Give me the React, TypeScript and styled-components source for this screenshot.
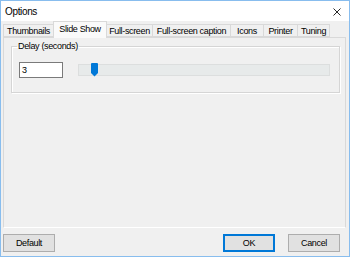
import React from 'react';
import styled, { createGlobalStyle } from 'styled-components';

const GlobalStyle = createGlobalStyle`
  html, body {
    margin: 0;
    padding: 0;
    background: #f0f0f0;
  }
  body {
    font-family: "Liberation Sans", Arial, sans-serif;
    font-size: 9px;
    letter-spacing: -0.35px;
    color: #000;
  }
`;

const Window = styled.div`
  width: 350px;
  height: 257px;
  box-sizing: border-box;
  border: 1px solid #88bdee;
  background: #f0f0f0;
  display: flex;
  flex-direction: column;
`;

const TitleBar = styled.div`
  height: 20px;
  background: #fff;
  display: flex;
  align-items: center;
  justify-content: space-between;
  padding: 0 8px 0 4px;
  font-size: 10px;
`;

const CloseIcon = styled.svg`
  width: 8px;
  height: 8px;
  margin-top: 1px;
`;

const TabStrip = styled.div`
  height: 16px;
  display: flex;
  align-items: flex-end;
  padding-left: 2px;
  position: relative;
  z-index: 1;
`;

const Tab = styled.div<{ $w: number; $active?: boolean }>`
  width: ${p => p.$w}px;
  height: ${p => (p.$active ? 17 : 13)}px;
  margin-bottom: ${p => (p.$active ? -1 : 0)}px;
  margin-right: -1px;
  box-sizing: border-box;
  border: 1px solid #d9d9d9;
  border-bottom: ${p => (p.$active ? 'none' : '1px solid #d9d9d9')};
  background: ${p => (p.$active ? '#fafafa' : '#f0f0f0')};
  display: flex;
  align-items: ${p => (p.$active ? 'flex-start' : 'center')};
  padding-top: ${p => (p.$active ? 2 : 0)}px;
  justify-content: center;
  white-space: nowrap;
  position: relative;
  z-index: ${p => (p.$active ? 2 : 1)};
`;

const Panel = styled.div`
  height: 191px;
  margin: 0 3px 0 2px;
  box-sizing: border-box;
  border: 1px solid #d9d9d9;
  border-bottom-color: #fff;
  background: #f0f0f0;
  padding: 3px 5px 0 7px;
`;

const GroupBox = styled.fieldset`
  margin: 0;
  padding: 10px 9px 14px 7px;
  border: 1px solid #d5d5d5;
  box-shadow: 1px 1px 0 #fff, inset 1px 1px 0 #fff;
  display: flex;
  align-items: center;
  gap: 15px;
  min-width: 0;
`;

const Legend = styled.legend`
  padding: 0 1px;
  margin-left: -2px;
  line-height: 11px;
`;

const NumberBox = styled.div`
  width: 44px;
  height: 16px;
  box-sizing: border-box;
  border: 1px solid #7a7a7a;
  background: #fff;
  display: flex;
  align-items: center;
  padding-left: 2px;
`;

const Track = styled.div`
  flex: 1;
  height: 12px;
  box-sizing: border-box;
  background: #e7eaea;
  border: 1px solid #dcdede;
  position: relative;
`;

const Thumb = styled.svg`
  position: absolute;
  top: -2px;
  width: 7px;
  height: 14px;
`;

const ButtonRow = styled.div`
  display: flex;
  align-items: center;
  padding: 6px 9px 0 2px;
  gap: 13px;
`;

const Spacer = styled.div`
  flex: 1;
`;

const Button = styled.div<{ $primary?: boolean }>`
  width: 52px;
  height: 18px;
  box-sizing: border-box;
  background: #e1e1e1;
  border: 1px solid ${p => (p.$primary ? '#0078d7' : '#adadad')};
  box-shadow: ${p => (p.$primary ? 'inset 0 0 0 1px #0078d7' : 'none')};
  display: flex;
  align-items: center;
  justify-content: center;
`;

const tabs = [
  { label: 'Thumbnails', w: 51 },
  { label: 'Slide Show', w: 54, active: true },
  { label: 'Full-screen', w: 47 },
  { label: 'Full-screen caption', w: 79 },
  { label: 'Icons', w: 34 },
  { label: 'Printer', w: 35 },
  { label: 'Tuning', w: 33 },
];

export default function App() {
  const delay = 3;
  const min = 1;
  const max = 40;
  const trackInner = 248;
  const thumbLeft = ((delay - min) / (max - min)) * (trackInner - 7);

  return (
    <>
      <GlobalStyle />
      <Window>
        <TitleBar>
          <span>Options</span>
          <CloseIcon viewBox="0 0 8 8">
            <path d="M0.5 0.5 L7.5 7.5 M7.5 0.5 L0.5 7.5" stroke="#111" strokeWidth="0.9" fill="none" />
          </CloseIcon>
        </TitleBar>

        <TabStrip>
          {tabs.map(t => (
            <Tab key={t.label} $w={t.w} $active={t.active}>
              {t.label}
            </Tab>
          ))}
        </TabStrip>

        <Panel>
          <GroupBox>
            <Legend>Delay (seconds)</Legend>
            <NumberBox>{delay}</NumberBox>
            <Track>
              <Thumb viewBox="0 0 7 14" style={{ left: thumbLeft }}>
                <path d="M1 0 H6 a1 1 0 0 1 1 1 V10 L3.5 13.5 L0 10 V1 a1 1 0 0 1 1 -1 Z" fill="#0078d7" />
              </Thumb>
            </Track>
          </GroupBox>
        </Panel>

        <ButtonRow>
          <Button>Default</Button>
          <Spacer />
          <Button $primary>OK</Button>
          <Button>Cancel</Button>
        </ButtonRow>
      </Window>
    </>
  );
}
